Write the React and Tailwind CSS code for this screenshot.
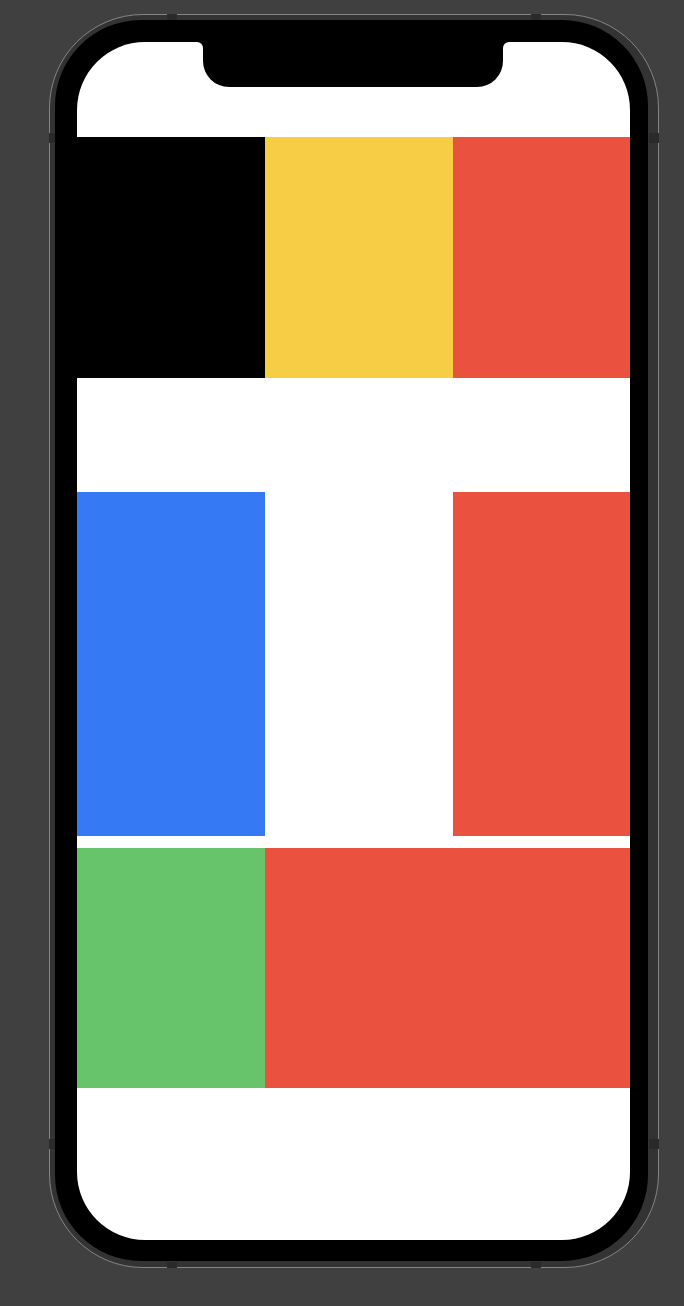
export default function App() {
  return (
    <div className="min-h-screen h-[1306px] bg-[#404040] pt-[14px] pl-[49px] overflow-hidden">
      {/* Device frame */}
      <div className="relative w-[610px] h-[1254px] rounded-[94px] border border-[#858585] bg-[#333333] pt-[5px] pl-[5px] pr-[10px] pb-[6px]">
        {/* antenna bands */}
        <div className="absolute top-[-1px] left-[117px] w-[10px] h-[6px] bg-[#2a2a2a]"></div>
        <div className="absolute top-[-1px] left-[481px] w-[10px] h-[6px] bg-[#2a2a2a]"></div>
        <div className="absolute bottom-[-1px] left-[117px] w-[10px] h-[6px] bg-[#2a2a2a]"></div>
        <div className="absolute bottom-[-1px] left-[481px] w-[10px] h-[6px] bg-[#2a2a2a]"></div>
        <div className="absolute left-[-1px] top-[118px] w-[6px] h-[10px] bg-[#2a2a2a]"></div>
        <div className="absolute right-[-1px] top-[118px] w-[10px] h-[10px] bg-[#2a2a2a]"></div>
        <div className="absolute left-[-1px] top-[1124px] w-[6px] h-[10px] bg-[#2a2a2a]"></div>
        <div className="absolute right-[-1px] top-[1124px] w-[10px] h-[10px] bg-[#2a2a2a]"></div>

        <div className="h-full rounded-[86px] bg-black pt-[22px] pl-[22px] pr-[18px] pb-[21px]">
          {/* Screen */}
          <div className="relative h-full bg-white rounded-[68px] overflow-hidden flex flex-col">
            {/* Notch */}
            <div className="absolute top-0 left-[126px] w-[300px] h-[45px] bg-black rounded-b-[26px]"></div>
            <div className="absolute top-0 left-[120px] w-[6px] h-[6px] bg-black">
              <div className="w-full h-full bg-white rounded-tr-[6px]"></div>
            </div>
            <div className="absolute top-0 left-[426px] w-[6px] h-[6px] bg-black">
              <div className="w-full h-full bg-white rounded-tl-[6px]"></div>
            </div>

            <div className="h-[95px] shrink-0"></div>

            <div className="flex h-[241px] shrink-0">
              <div className="w-[188px] shrink-0 bg-black"></div>
              <div className="w-[188px] shrink-0 bg-[#f7cd46]"></div>
              <div className="flex-1 bg-[#eb513f]"></div>
            </div>

            <div className="h-[114px] shrink-0"></div>

            <div className="flex h-[344px] shrink-0">
              <div className="w-[188px] shrink-0 bg-[#3579f5]"></div>
              <div className="w-[188px] shrink-0 bg-white"></div>
              <div className="flex-1 bg-[#eb513f]"></div>
            </div>

            <div className="h-[12px] shrink-0"></div>

            <div className="flex h-[240px] shrink-0">
              <div className="w-[188px] shrink-0 bg-[#67c46a]"></div>
              <div className="flex-1 bg-[#eb513f]"></div>
            </div>

            <div className="flex-1"></div>
          </div>
        </div>
      </div>
    </div>
  );
}
